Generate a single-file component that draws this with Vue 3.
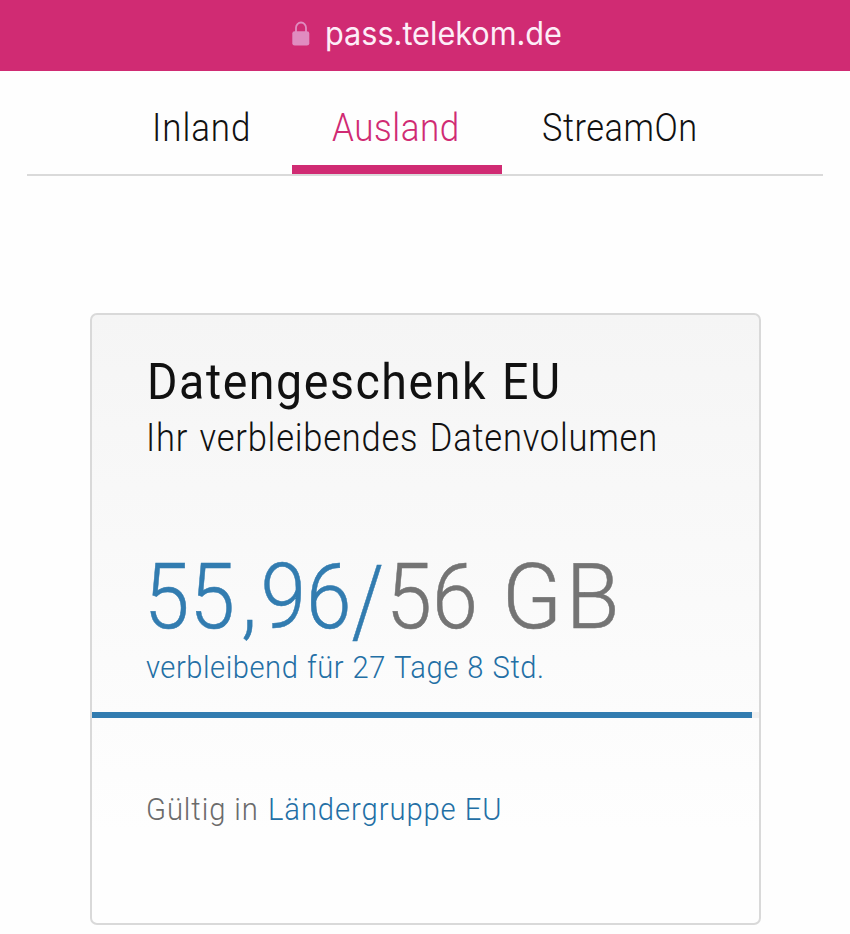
<script setup>
const host = 'pass.telekom.de'
const tabs = [
  { id: 'inland', label: 'Inland', active: false },
  { id: 'ausland', label: 'Ausland', active: true },
  { id: 'streamon', label: 'StreamOn', active: false },
]
const progress = 98.9
</script>

<template>
  <div class="page">
    <header class="address-bar">
      <svg class="lock" viewBox="0 0 18 25" aria-hidden="true">
        <path d="M4 12V6.8a5 5.3 0 0 1 10 0V12" fill="none" stroke="currentColor" stroke-width="1.8" />
        <rect x="0.3" y="10.2" width="17" height="14.4" rx="2.4" fill="currentColor" />
      </svg>
      <span class="host">{{ host }}</span>
    </header>

    <nav class="tabs">
      <a v-for="tab in tabs" :key="tab.id" class="tab" :class="[tab.id, { active: tab.active }]">
        <span class="tab-label">{{ tab.label }}</span>
      </a>
    </nav>

    <main class="card">
      <h1 class="title"><span>Datengeschenk EU</span></h1>
      <p class="subtitle"><span>Ihr verbleibendes Datenvolumen</span></p>
      <p class="volume">
        <span class="left">55<span class="comma">,</span>96<span class="slash">/</span></span><span class="total">56 <span class="unit">GB</span></span>
      </p>
      <p class="duration"><span>verbleibend für 27 Tage 8 Std.</span></p>
      <div class="track"><div class="fill" :style="{ width: progress + '%' }"></div></div>
      <p class="validity">
        <span class="muted">Gültig in</span><a class="link">Ländergruppe EU</a>
      </p>
    </main>
  </div>
</template>

<style>
body {
  background: #fefefe;
}
</style>

<style scoped>
.page {
  height: 934px;
  overflow: hidden;
  font-family: Roboto, "Liberation Sans", sans-serif;
  font-weight: 300;
  color: #111;
  white-space: nowrap;
}
.address-bar {
  display: flex;
  height: 71px;
  background: #d02b73;
}
.lock {
  width: 18px;
  height: 25px;
  margin: 21px 15px 0 292px;
  color: #e08cc0;
}
.host {
  font-family: Inter, "Liberation Sans", sans-serif;
  font-weight: 400;
  font-size: 32px;
  line-height: 68px;
  color: #fdeef8;
  transform: scaleX(0.957);
  transform-origin: 0 50%;
}
.tabs {
  display: flex;
  height: 103px;
  margin: 0 27px;
  border-bottom: 2px solid #dadada;
}
.tab {
  box-sizing: border-box;
  height: 103px;
  padding-top: 35px;
  font-size: 38px;
  line-height: 44px;
}
.tab-label,
p > *,
h1 > * {
  display: inline-block;
  transform-origin: 0 50%;
}
.tab-label {
  transform: scaleX(0.92);
  letter-spacing: 0.6px;
}
.inland {
  width: 265px;
  padding-left: 124.5px;
}
.inland .tab-label {
  letter-spacing: 1px;
}
.ausland {
  width: 209.5px;
  padding-left: 40px;
}
.streamon {
  padding-left: 40.5px;
}
.streamon .tab-label {
  transform: scaleX(0.903);
}
.active {
  color: #d02b73;
  border-bottom: 9px solid #d02b73;
}
.card {
  box-sizing: border-box;
  width: 671px;
  height: 612px;
  margin: 137px 0 0 90px;
  border: 2px solid #d9d9d9;
  border-radius: 7px;
  background: linear-gradient(#f5f5f5, #fefefe 85%);
}
h1,
p {
  margin: 0;
  padding-left: 54px;
  font-weight: 300;
}
.title {
  margin-top: 36px;
  padding-left: 55px;
  font-size: 50.5px;
  line-height: 62px;
  font-weight: 400;
}
.title span {
  transform: scaleX(0.92);
  letter-spacing: 1.7px;
  word-spacing: 2px;
}
.subtitle {
  font-size: 38px;
  line-height: 51px;
}
.subtitle span {
  transform: scaleX(0.908);
  letter-spacing: 0.85px;
  word-spacing: 2.5px;
}
.volume {
  display: flex;
  margin-top: 82px;
  padding-left: 52px;
  font-size: 90px;
  line-height: 104px;
  -webkit-text-stroke: 0.5px currentColor;
}
.left {
  width: 242px;
  color: #327cb0;
  transform: scaleX(0.91);
}
.comma {
  margin: 0 4px 0 7px;
}
.slash {
  display: inline-block;
  transform: translateY(4px) scaleY(1.1);
}
.total {
  color: #747474;
  transform: scaleX(0.92);
}
.unit {
  display: inline-block;
  margin-left: 4px;
  letter-spacing: 4px;
  transform: scaleX(1.06);
  transform-origin: 0 50%;
}
.duration {
  margin-top: -3px;
  font-size: 32px;
  line-height: 40px;
  color: #236fa5;
}
.duration span {
  transform: scaleX(0.91);
  letter-spacing: 0.6px;
  word-spacing: 1px;
}
.track {
  height: 6px;
  margin-top: 25px;
  background: #f0f0f0;
}
.fill {
  height: 6px;
  background: #327cb0;
}
.validity {
  display: flex;
  margin-top: 71px;
  font-size: 32px;
  line-height: 40px;
}
.validity > * {
  transform: scaleX(0.913);
  letter-spacing: 1px;
}
.muted {
  width: 122px;
  color: #6b6b6b;
}
.link {
  color: #236fa5;
}
</style>
